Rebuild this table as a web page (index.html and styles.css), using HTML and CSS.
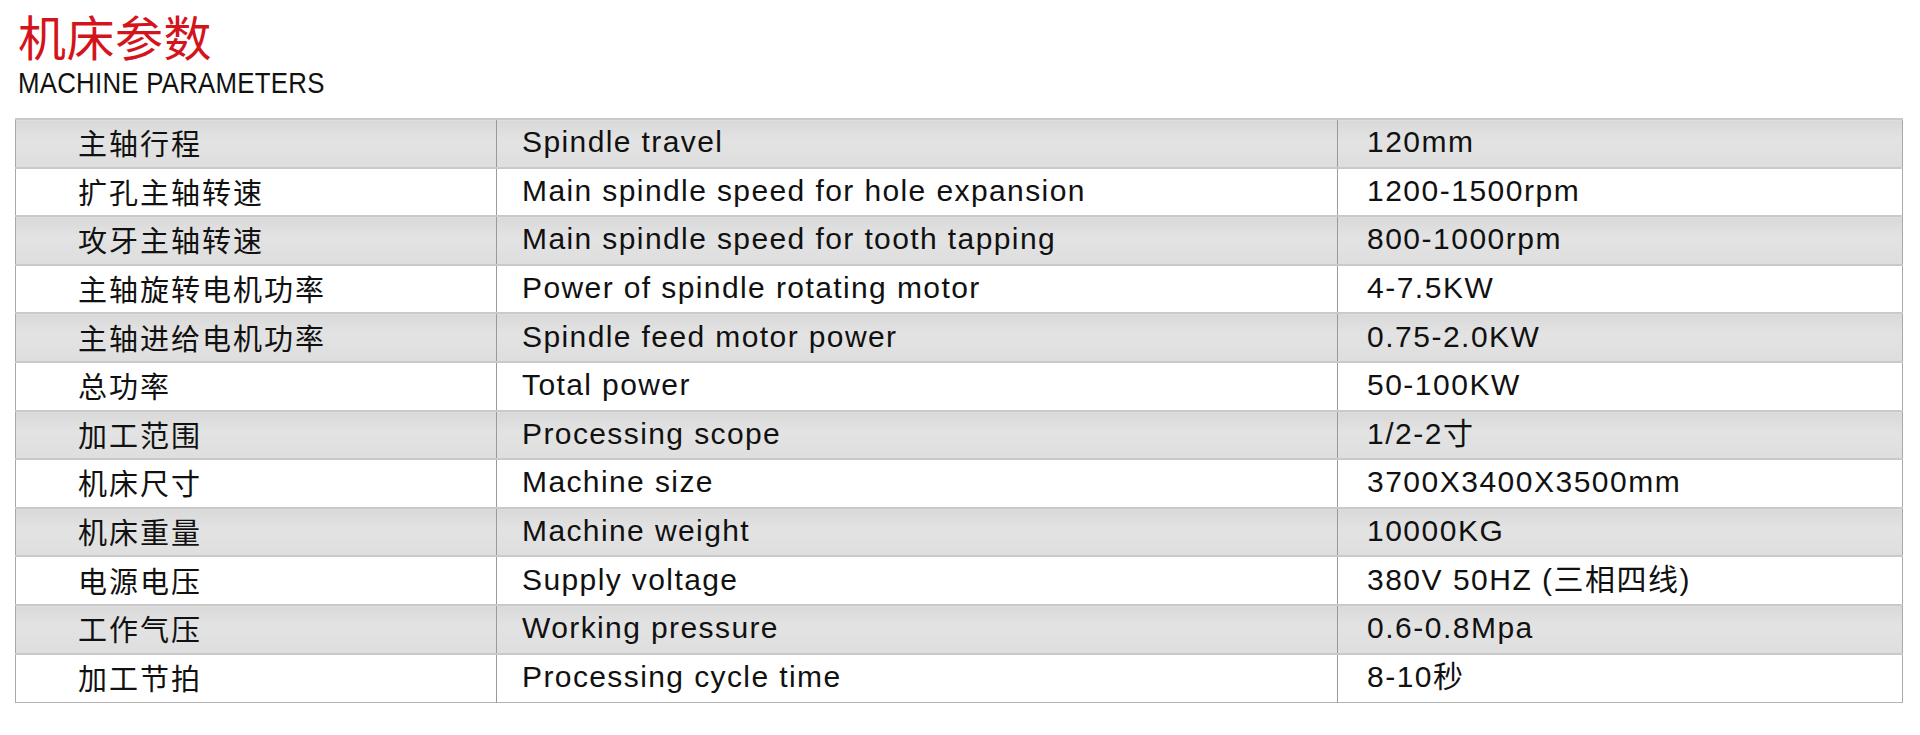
FILE: index.html
```html
<!DOCTYPE html>
<html lang="zh-CN">
<head>
<meta charset="utf-8">
<title>机床参数</title>
<link rel="stylesheet" href="styles.css">
</head>
<body>
<header class="head">
  <h1 class="title-cn">机床参数</h1>
  <p class="title-en">MACHINE PARAMETERS</p>
</header>
<table class="params">
  <colgroup>
    <col class="c1"><col class="c2"><col class="c3">
  </colgroup>
  <tbody>
    <tr class="alt"><td class="cn">主轴行程</td><td class="en">Spindle travel</td><td class="val">120mm</td></tr>
    <tr><td class="cn">扩孔主轴转速</td><td class="en">Main spindle speed for hole expansion</td><td class="val">1200-1500rpm</td></tr>
    <tr class="alt"><td class="cn">攻牙主轴转速</td><td class="en">Main spindle speed for tooth tapping</td><td class="val">800-1000rpm</td></tr>
    <tr><td class="cn">主轴旋转电机功率</td><td class="en">Power of spindle rotating motor</td><td class="val">4-7.5KW</td></tr>
    <tr class="alt"><td class="cn">主轴进给电机功率</td><td class="en">Spindle feed motor power</td><td class="val">0.75-2.0KW</td></tr>
    <tr><td class="cn">总功率</td><td class="en">Total power</td><td class="val">50-100KW</td></tr>
    <tr class="alt"><td class="cn">加工范围</td><td class="en">Processing scope</td><td class="val">1/2-2寸</td></tr>
    <tr><td class="cn">机床尺寸</td><td class="en">Machine size</td><td class="val">3700X3400X3500mm</td></tr>
    <tr class="alt"><td class="cn">机床重量</td><td class="en">Machine weight</td><td class="val">10000KG</td></tr>
    <tr><td class="cn">电源电压</td><td class="en">Supply voltage</td><td class="val">380V 50HZ (三相四线)</td></tr>
    <tr class="alt"><td class="cn">工作气压</td><td class="en">Working pressure</td><td class="val">0.6-0.8Mpa</td></tr>
    <tr><td class="cn">加工节拍</td><td class="en">Processing cycle time</td><td class="val">8-10秒</td></tr>
  </tbody>
</table>
</body>
</html>
```

FILE: styles.css
```css
html, body {
  margin: 0;
  padding: 0;
  background: #ffffff;
}

body {
  font-family: "Liberation Sans", "Noto Sans CJK SC", sans-serif;
  color: #111111;
}

.head {
  padding: 7px 0 0 18px;
}

.title-cn {
  margin: 0;
  font-family: "Noto Sans CJK SC", sans-serif;
  font-weight: 400;
  font-size: 48px;
  line-height: 56px;
  color: #d3141c;
  letter-spacing: 0.5px;
}

.title-en {
  display: inline-block;
  margin: 4px 0 0 0;
  font-family: "Liberation Sans", sans-serif;
  font-size: 30px;
  line-height: 32px;
  color: #111111;
  letter-spacing: 0.3px;
  transform: scaleX(0.86);
  transform-origin: left center;
}

.params {
  margin: 19px 0 0 15px;
  width: 1887px;
  border-collapse: collapse;
  table-layout: fixed;
  border-left: 1px solid #a8a8a8;
  border-right: 1px solid #a8a8a8;
  border-bottom: 1px solid #b4b4b4;
}

.c1 { width: 481px; }
.c2 { width: 841px; }
.c3 { width: 565px; }

.params tr {
  height: 48.6px;
  background: #ffffff;
  border-top: 2px solid #c9c9c9;
}

.params tr.alt {
  background: linear-gradient(#d9d9d9, #e3e3e3 40%, #dedede);
}

.params td {
  padding: 0 0 2px 0;
  vertical-align: middle;
  font-size: 30px;
  line-height: 34px;
  white-space: nowrap;
}

.params td + td {
  border-left: 1px solid #9a9a9a;
}

.cn {
  padding-left: 62px !important;
  font-family: "Noto Sans CJK SC", sans-serif;
  font-size: 29px !important;
  letter-spacing: 2px;
}

.en {
  padding-left: 25px !important;
  letter-spacing: 1.4px;
}

.val {
  padding-left: 29px !important;
  letter-spacing: 1.5px;
}
```
